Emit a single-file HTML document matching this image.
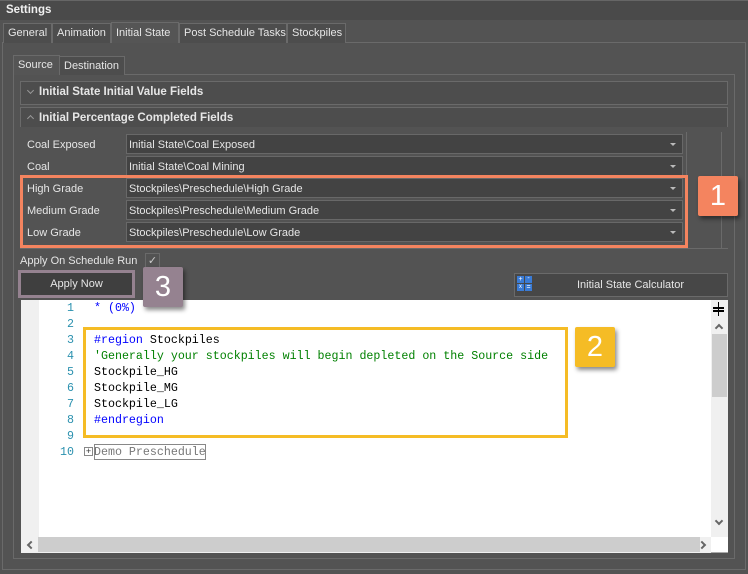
<!DOCTYPE html>
<html><head><meta charset="utf-8"><style>
*{box-sizing:border-box;margin:0;padding:0}
body{width:748px;height:574px;background:#535353;font-family:"Liberation Sans",sans-serif;font-size:11px;color:#e6e6e6;position:relative;overflow:hidden}
.a{position:absolute;white-space:nowrap}
.tab{position:absolute;top:23px;height:20px;border:1px solid #6a6a6a;border-bottom:none;line-height:19px;padding-left:4px;background:#4d4d4d;white-space:nowrap;overflow:hidden}
.combo{position:absolute;left:126px;width:557px;height:20px;background:#434343;border:1px solid #686868;line-height:20px;padding-left:2px;white-space:nowrap}
.combo:after{content:"";position:absolute;right:6px;top:8px;border-left:3px solid transparent;border-right:3px solid transparent;border-top:3px solid #bbb}
.lbl{position:absolute;left:27px;line-height:22px}
.badge{position:absolute;width:40px;height:40px;color:#fff;font-size:29px;text-align:center;line-height:41px;box-shadow:2px 3px 4px rgba(0,0,0,.45);border-radius:2px}
.code{position:absolute;left:94px;font-family:"Liberation Mono",monospace;font-size:11.65px;line-height:16px;white-space:pre;color:#000}
.ln{position:absolute;left:40px;width:34px;text-align:right;font-family:"Liberation Mono",monospace;font-size:11.65px;line-height:16px;color:#2b91af}
.chev{position:absolute;width:5px;height:5px;border-left:1.5px solid #999;border-top:1.5px solid #999}
.sc{position:absolute;width:6px;height:6px;border-left:2px solid #666;border-top:2px solid #666}
</style></head><body>
<div class="a" style="left:0;top:0;width:748px;height:20px;background:#4a4a4a;border-top:1px solid #666"></div>
<div class="a" style="left:6px;top:4px;font-weight:bold;font-size:11.5px;color:#f0f0f0">Settings</div>
<div class="a" style="left:2px;top:42px;width:744px;height:528px;border:1px solid #6a6a6a"></div>
<div class="tab" style="left:3px;width:49px">General</div>
<div class="tab" style="left:52px;width:59px">Animation</div>
<div class="tab" style="left:111px;width:68px;top:22px;height:21px;background:#555;line-height:21px">Initial State</div>
<div class="tab" style="left:179px;width:108px">Post Schedule Tasks</div>
<div class="tab" style="left:287px;width:59px">Stockpiles</div>
<div class="a" style="left:13px;top:74px;width:722px;height:485px;border:1px solid #6a6a6a"></div>
<div class="tab" style="left:13px;top:55px;width:47px;height:20px;background:#555;border-bottom:none">Source</div>
<div class="tab" style="left:59px;top:56px;width:66px;height:19px;line-height:18px">Destination</div>
<div class="a" style="left:20px;top:81px;width:708px;height:24px;border:1px solid #6a6a6a;background:#4d4d4d"></div>
<div class="chev" style="left:28px;top:88px;transform:rotate(225deg)"></div>
<div class="a" style="left:39px;top:86px;font-weight:bold;font-size:11.5px">Initial State Initial Value Fields</div>
<div class="a" style="left:20px;top:107px;width:708px;height:20px;border:1px solid #6a6a6a;border-bottom:none;background:#4d4d4d"></div>
<div class="chev" style="left:28px;top:116px;transform:rotate(45deg)"></div>
<div class="a" style="left:39px;top:112px;font-weight:bold;font-size:11.5px">Initial Percentage Completed Fields</div>
<div class="a" style="left:686px;top:132px;width:1px;height:116px;background:#6a6a6a"></div>
<div class="a" style="left:721px;top:132px;width:1px;height:116px;background:#6a6a6a"></div>
<div class="a" style="left:20px;top:248px;width:708px;height:1px;background:#6a6a6a"></div>
<div class="lbl" style="top:134px">Coal Exposed</div><div class="combo" style="top:134px">Initial State\Coal Exposed</div>
<div class="lbl" style="top:156px">Coal</div><div class="combo" style="top:156px">Initial State\Coal Mining</div>
<div class="lbl" style="top:178px">High Grade</div><div class="combo" style="top:178px">Stockpiles\Preschedule\High Grade</div>
<div class="lbl" style="top:200px">Medium Grade</div><div class="combo" style="top:200px">Stockpiles\Preschedule\Medium Grade</div>
<div class="lbl" style="top:222px">Low Grade</div><div class="combo" style="top:222px">Stockpiles\Preschedule\Low Grade</div>
<div class="a" style="left:20px;top:175px;width:668px;height:73px;border:3px solid #f4845f"></div>
<div class="badge" style="left:698px;top:176px;background:#f4845f">1</div>
<div class="a" style="left:20px;top:255px">Apply On Schedule Run</div>
<div class="a" style="left:145px;top:253px;width:15px;height:16px;border:1px solid #6a6a6a;color:#ccc;font-size:11px;text-align:center;line-height:14px">&#x2713;</div>
<div class="a" style="left:18px;top:270px;width:117px;height:28px;border:3px solid #958290;background:#3f3f3f;text-align:center;line-height:23px">Apply Now</div>
<div class="a" style="left:514px;top:273px;width:214px;height:24px;border:1px solid #6a6a6a;background:#474747;line-height:23px;padding-left:62px">Initial State Calculator</div>
<div class="a" style="left:517px;top:276px;width:7px;height:7px;background:#3a7bd5;color:#fff;font-size:7px;line-height:7px;text-align:center">+</div>
<div class="a" style="left:525px;top:276px;width:7px;height:7px;background:#3a7bd5;color:#fff;font-size:7px;line-height:6px;text-align:center">-</div>
<div class="a" style="left:517px;top:284px;width:7px;height:7px;background:#3a7bd5;color:#fff;font-size:6px;line-height:7px;text-align:center">x</div>
<div class="a" style="left:525px;top:284px;width:7px;height:7px;background:#3a7bd5;color:#fff;font-size:7px;line-height:7px;text-align:center">=</div>
<div class="a" style="left:21px;top:300px;width:707px;height:253px;background:#fff;border-bottom:1px solid #aaa"></div>
<div class="a" style="left:21px;top:300px;width:18px;height:237px;background:#f0f0f0"></div>
<div class="a" style="left:711px;top:300px;width:17px;height:237px;background:#f0f0f0"></div>
<div class="a" style="left:712px;top:334px;width:15px;height:63px;background:#cdcdcd"></div>
<div class="a" style="left:713px;top:307px;width:11px;height:1.5px;background:#000"></div>
<div class="a" style="left:713px;top:310px;width:11px;height:1.5px;background:#000"></div>
<div class="a" style="left:718px;top:302px;width:1px;height:14px;background:#000"></div>
<div class="sc" style="left:716px;top:325px;transform:rotate(45deg)"></div>
<div class="sc" style="left:716px;top:518px;transform:rotate(225deg)"></div>
<div class="a" style="left:21px;top:537px;width:690px;height:16px;background:#f0f0f0"></div>
<div class="a" style="left:38px;top:537px;width:670px;height:15px;background:#cdcdcd"></div>
<div class="sc" style="left:28px;top:542px;transform:rotate(-45deg)"></div>
<div class="sc" style="left:247px;top:542px;display:none"></div>
<div class="sc" style="left:248px;top:0;display:none"></div>
<div class="a" style="left:700px;top:537px;width:11px;height:16px;background:#f0f0f0"></div>
<div class="sc" style="left:699px;top:542px;transform:rotate(135deg)"></div>
<div class="ln" style="top:301px">1<br>2<br>3<br>4<br>5<br>6<br>7<br>8<br>9<br>10</div>
<div class="code" style="top:301px"><span style="color:#00f">* (0%)</span>

<span style="color:#00f">#region</span> Stockpiles
<span style="color:#008000">'Generally your stockpiles will begin depleted on the Source side</span>
Stockpile_HG
Stockpile_MG
Stockpile_LG
<span style="color:#00f">#endregion</span>

<span style="color:#777">Demo Preschedule</span></div>
<div class="a" style="left:84px;top:447px;width:9px;height:9px;border:1px solid #888;font-size:9px;line-height:7px;text-align:center;color:#333">+</div>
<div class="a" style="left:94px;top:444px;width:112px;height:16px;border:1px solid #888"></div>
<div class="a" style="left:83px;top:327px;width:485px;height:111px;border:3px solid #f5bc25"></div>
<div class="badge" style="left:575px;top:327px;background:#f5bc25">2</div>
<div class="badge" style="left:143px;top:267px;background:#958290">3</div>
</body></html>
